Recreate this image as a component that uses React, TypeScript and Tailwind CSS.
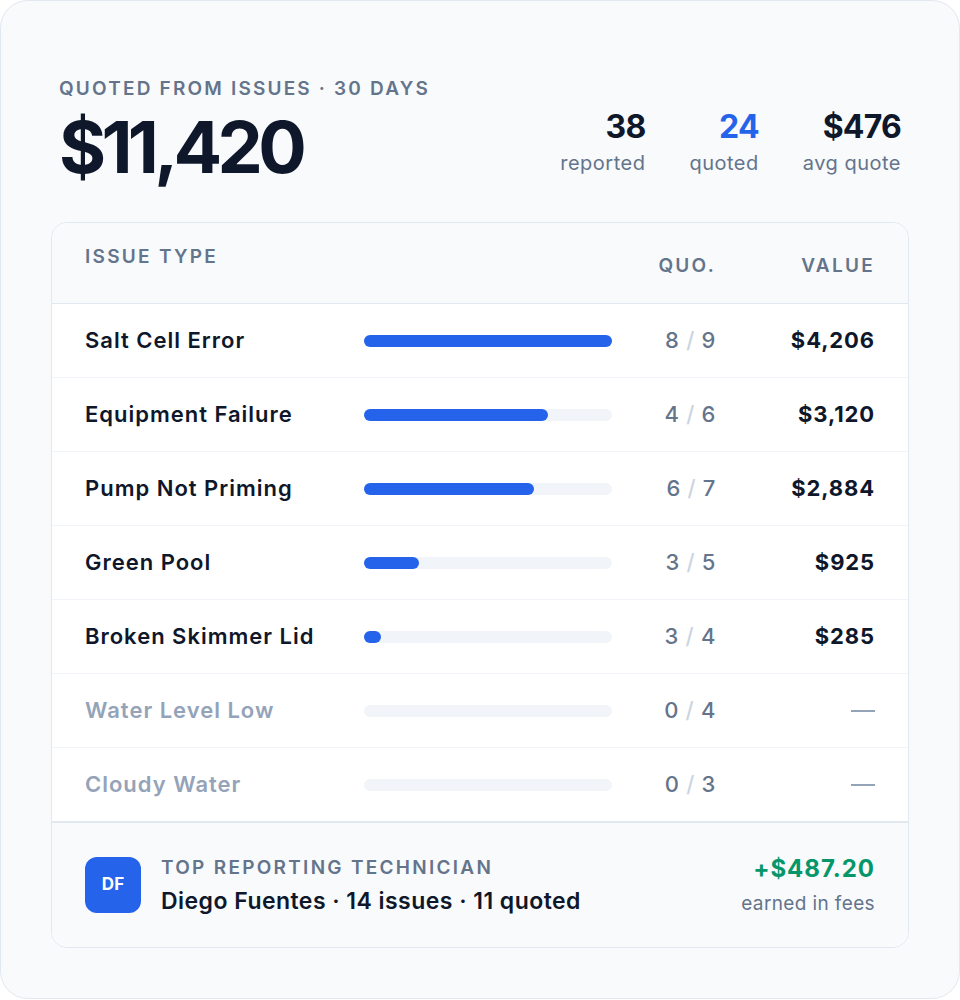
const rows = [
  { name: 'Salt Cell Error', q: 8, t: 9, value: 4206 },
  { name: 'Equipment Failure', q: 4, t: 6, value: 3120 },
  { name: 'Pump Not Priming', q: 6, t: 7, value: 2884 },
  { name: 'Green Pool', q: 3, t: 5, value: 925 },
  { name: 'Broken Skimmer Lid', q: 3, t: 4, value: 285 },
  { name: 'Water Level Low', q: 0, t: 4, value: 0 },
  { name: 'Cloudy Water', q: 0, t: 3, value: 0 },
];

const max = Math.max(...rows.map((r) => r.value));

function Stat({ value, label, blue }: { value: string; label: string; blue?: boolean }) {
  return (
    <div className="flex flex-col items-end">
      <div className={`text-[32px] font-bold leading-[40px] tracking-tight ${blue ? 'text-[#2563eb]' : 'text-[#0f172a]'}`}>
        {value}
      </div>
      <div className="mt-[2px] text-[20px] leading-[28px] tracking-[0.025em] text-[#64748b]">{label}</div>
    </div>
  );
}

export default function App() {
  return (
    <div className="w-[960px] h-[1000px] font-['Inter',sans-serif]">
      <div className="h-[999px] rounded-[28px] border border-[#e2e8f0] bg-[#f8fafc] px-[50px] pb-[50px] pt-[74px] flex flex-col">
        <div className="flex items-start justify-between px-2">
          <div>
            <div className="text-[19px] font-semibold uppercase leading-[28px] tracking-[0.115em] text-[#64748b]">
              Quoted from issues · 30 days
            </div>
            <div className="mt-[6px] text-[72px] font-bold leading-[76px] tracking-[-0.065em] text-[#0f172a]">
              $11,420
            </div>
          </div>
          <div className="mt-[32px] flex gap-11">
            <Stat value="38" label="reported" />
            <Stat value="24" label="quoted" blue />
            <Stat value="$476" label="avg quote" />
          </div>
        </div>

        <div className="mt-[37px] flex-1 overflow-hidden rounded-[16px] border border-[#e2e8f0] bg-white flex flex-col">
          <div className="flex h-[81px] items-start border-b border-[#e2e8f0] bg-[#f8fafc] px-[33px] text-[19px] font-semibold uppercase leading-[28px] tracking-[0.12em] text-[#64748b]">
            <div className="mt-[20px] w-[527px]">Issue type</div>
            <div className="mt-[29px] flex-1 text-right">Quo.</div>
            <div className="mt-[29px] w-[159px] text-right">Value</div>
          </div>

          {rows.map((r) => {
            const dim = r.q === 0;
            return (
              <div key={r.name} className="flex h-[74px] items-center border-b border-[#f1f5f9] px-[33px]">
                <div className={`w-[279px] text-[22px] font-semibold tracking-[0.045em] ${dim ? 'text-[#94a3b8]' : 'text-[#0f172a]'}`}>
                  {r.name}
                </div>
                <div className="h-[12px] w-[248px] rounded-full bg-[#f1f5f9]">
                  {r.value > 0 && (
                    <div
                      className="h-full rounded-full bg-[#2563eb]"
                      style={{ width: `${Math.max((r.value / max) * 100, 7)}%` }}
                    />
                  )}
                </div>
                <div className="flex-1 text-right text-[22px] font-medium tracking-[0.03em] text-[#64748b]">
                  {r.q} <span className="text-[#cbd5e1]">/</span> {r.t}
                </div>
                <div className="w-[159px] text-right text-[22px] font-bold tracking-[0.04em] text-[#0f172a]">
                  {r.value > 0 ? (
                    `$${r.value.toLocaleString('en-US')}`
                  ) : (
                    <span className="inline-block h-[2px] w-[24px] translate-y-[-6px] bg-[#94a3b8]" />
                  )}
                </div>
              </div>
            );
          })}

          <div className="flex flex-1 items-center justify-between border-t-2 border-[#e2e8f0] bg-[#f8fafc] px-[33px] -mt-px">
            <div className="flex items-center gap-[20px]">
              <div className="flex h-[56px] w-[56px] items-center justify-center rounded-[12px] bg-[#2563eb] text-[17px] font-bold text-white">
                DF
              </div>
              <div>
                <div className="text-[19px] font-semibold uppercase leading-[26px] tracking-[0.12em] text-[#64748b]">
                  Top reporting technician
                </div>
                <div className="mt-[5px] text-[23px] font-semibold leading-[30px] tracking-[0.02em] text-[#0f172a]">
                  Diego Fuentes · 14 issues · 11 quoted
                </div>
              </div>
            </div>
            <div className="flex flex-col items-end">
              <div className="text-[24px] font-bold leading-[30px] tracking-[0.04em] text-[#059669]">+$487.20</div>
              <div className="mt-[7px] text-[19px] leading-[26px] tracking-[0.02em] text-[#64748b]">earned in fees</div>
            </div>
          </div>
        </div>
      </div>
    </div>
  );
}
